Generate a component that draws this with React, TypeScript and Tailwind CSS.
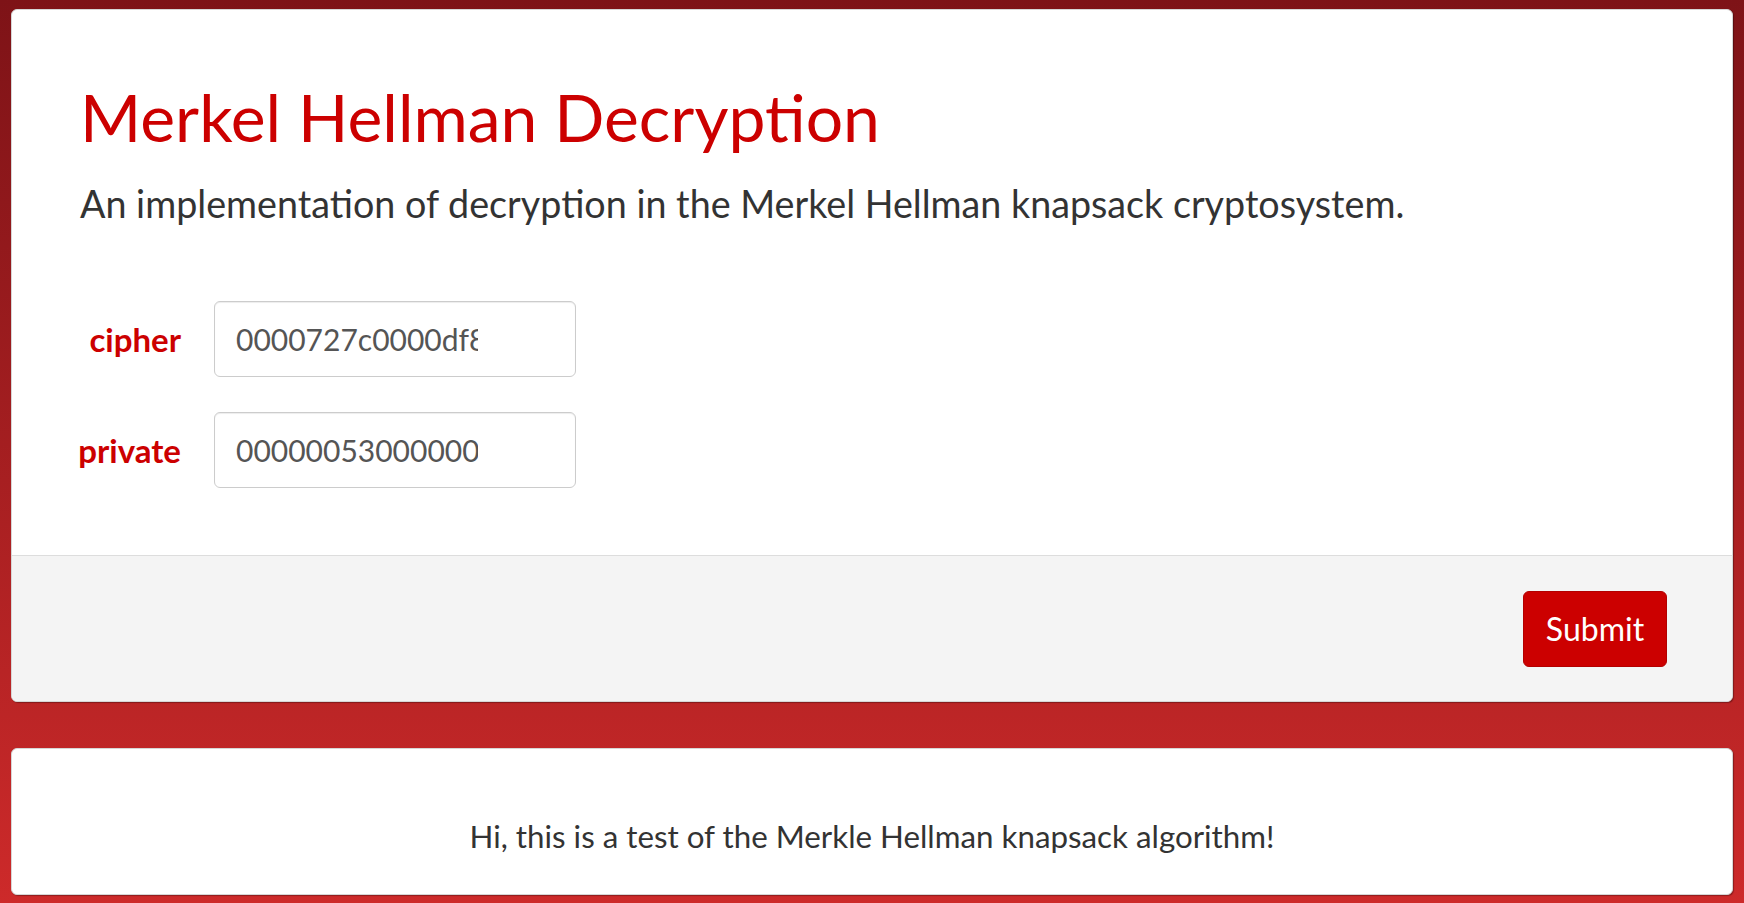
import { useState } from "react";

const CIPHER =
  "0000727c0000df800000a1b20000c4e50000f3110000812d00006f4a0000b9e3";
const PRIVATE =
  "000000530000008a000001f7000003c50000089200001131000023ee00004859";

function FieldRow({ label, value }: { label: string; value: string }) {
  return (
    <div className="flex items-center gap-[33px]">
      <label className="w-[169px] text-right text-[33px] font-bold text-[#cc0000]">
        {label}
      </label>
      <input
        readOnly
        value={value}
        className="h-[76px] w-[362px] rounded-[6px] border border-[#cccccc] bg-white pl-[21px] pr-[97px] text-[30px] text-[#555555] shadow-[inset_0_1px_1px_rgba(0,0,0,0.075)] outline-none"
      />
    </div>
  );
}

export default function App() {
  const [result] = useState("Hi, this is a test of the Merkle Hellman knapsack algorithm!");

  return (
    <div className="min-h-screen bg-linear-to-b from-[#7e1317] to-[#cd2a2a] px-[11px] pt-[9px] pb-[8px] font-['Source_Sans_Pro',Lato,sans-serif] leading-[1.2]">
      <div className="overflow-hidden rounded-[6px] border border-[#d6d6d6] bg-white shadow-[1px_1px_1px_rgba(0,0,0,0.3)]">
        <div className="px-[68px] pt-[67px] pb-[67px]">
          <h1 className="text-[66px] font-normal text-[#cc0000]">Merkel Hellman Decryption</h1>
          <p className="mt-[25px] text-[37.7px] text-[#333333]">
            An implementation of decryption in the Merkel Hellman knapsack cryptosystem.
          </p>
          <div className="-ml-[68px] mt-[75px] flex flex-col gap-[35px]">
            <FieldRow label="cipher" value={CIPHER} />
            <FieldRow label="private" value={PRIVATE} />
          </div>
        </div>
        <div className="flex h-[146px] items-center justify-end border-t border-[#dddddd] bg-[#f4f4f4] pr-[65px]">
          <button className="h-[76px] w-[144px] rounded-[6px] border border-[#b30000] bg-[#cc0000] text-[32px] text-white">
            Submit
          </button>
        </div>
      </div>

      <div className="mt-[46px] rounded-[6px] border border-[#d6d6d6] bg-white pt-[69px] pb-[38px] text-center shadow-[1px_1px_1px_rgba(0,0,0,0.3)]">
        <p className="text-[31.3px] text-[#333333]">{result}</p>
      </div>
    </div>
  );
}
